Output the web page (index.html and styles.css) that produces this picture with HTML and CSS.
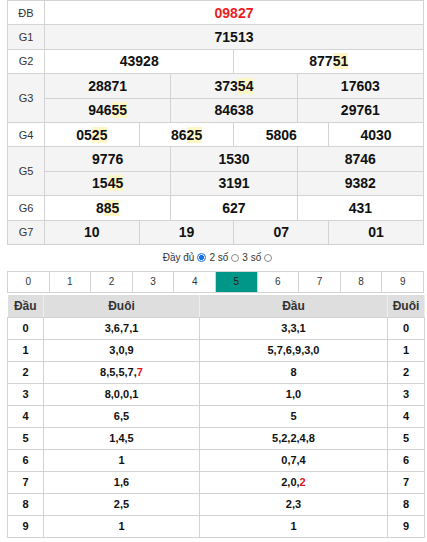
FILE: index.html
```html
<!DOCTYPE html>
<html lang="vi">
<head>
<meta charset="utf-8">
<link rel="stylesheet" href="styles.css">
</head>
<body>
<div class="wrap">
  <table class="kq">
    <colgroup>
      <col class="c-lbl">
      <col><col><col><col><col><col><col><col><col><col><col><col>
    </colgroup>
    <tr class="w"><td class="lbl">ĐB</td><td colspan="12" class="num db">09827</td></tr>
    <tr class="g"><td class="lbl">G1</td><td colspan="12" class="num">71513</td></tr>
    <tr class="w"><td class="lbl">G2</td><td colspan="6" class="num">43928</td><td colspan="6" class="num">877<span class="hl">51</span></td></tr>
    <tr class="g"><td class="lbl" rowspan="2">G3</td><td colspan="4" class="num">28871</td><td colspan="4" class="num">373<span class="hl">54</span></td><td colspan="4" class="num">17603</td></tr>
    <tr class="g"><td colspan="4" class="num">946<span class="hl">55</span></td><td colspan="4" class="num">84638</td><td colspan="4" class="num">29761</td></tr>
    <tr class="w"><td class="lbl">G4</td><td colspan="3" class="num">05<span class="hl">25</span></td><td colspan="3" class="num">86<span class="hl">25</span></td><td colspan="3" class="num">5806</td><td colspan="3" class="num">4030</td></tr>
    <tr class="g"><td class="lbl" rowspan="2">G5</td><td colspan="4" class="num">9776</td><td colspan="4" class="num">1530</td><td colspan="4" class="num">8746</td></tr>
    <tr class="g"><td colspan="4" class="num">15<span class="hl">45</span></td><td colspan="4" class="num">3191</td><td colspan="4" class="num">9382</td></tr>
    <tr class="w"><td class="lbl">G6</td><td colspan="4" class="num">8<span class="hl">85</span></td><td colspan="4" class="num">627</td><td colspan="4" class="num">431</td></tr>
    <tr class="g"><td class="lbl">G7</td><td colspan="3" class="num">10</td><td colspan="3" class="num">19</td><td colspan="3" class="num">07</td><td colspan="3" class="num">01</td></tr>
  </table>

  <div class="opts">
    <span>Đầy đủ</span><span class="radio on"></span><span>2 số</span><span class="radio"></span><span>3 số</span><span class="radio"></span>
  </div>

  <div class="tabs">
    <div class="tab">0</div><div class="tab">1</div><div class="tab">2</div><div class="tab">3</div><div class="tab">4</div><div class="tab active">5</div><div class="tab">6</div><div class="tab">7</div><div class="tab">8</div><div class="tab">9</div>
  </div>

  <table class="ld">
    <colgroup>
      <col class="c1"><col class="c2"><col class="c3"><col class="c4">
    </colgroup>
    <tr class="hd"><th>Đầu</th><th>Đuôi</th><th>Đầu</th><th>Đuôi</th></tr>
    <tr><td>0</td><td>3,6,7,1</td><td>3,3,1</td><td>0</td></tr>
    <tr><td>1</td><td>3,0,9</td><td>5,7,6,9,3,0</td><td>1</td></tr>
    <tr><td>2</td><td>8,5,5,7,<span class="red">7</span></td><td>8</td><td>2</td></tr>
    <tr><td>3</td><td>8,0,0,1</td><td>1,0</td><td>3</td></tr>
    <tr><td>4</td><td>6,5</td><td>5</td><td>4</td></tr>
    <tr><td>5</td><td>1,4,5</td><td>5,2,2,4,8</td><td>5</td></tr>
    <tr><td>6</td><td>1</td><td>0,7,4</td><td>6</td></tr>
    <tr><td>7</td><td>1,6</td><td>2,0,<span class="red">2</span></td><td>7</td></tr>
    <tr><td>8</td><td>2,5</td><td>2,3</td><td>8</td></tr>
    <tr><td>9</td><td>1</td><td>1</td><td>9</td></tr>
  </table>
</div>
</body>
</html>
```

FILE: styles.css
```css
html, body {
  margin: 0;
  padding: 0;
  background: #fff;
}
body {
  font-family: "Liberation Sans", Arial, sans-serif;
  color: #222;
}
.wrap {
  width: 417px;
  margin-left: 7px;
}
table {
  border-collapse: collapse;
  table-layout: fixed;
  width: 417px;
}
.kq td {
  border: 1px solid #d3d3d3;
  height: 23.4px;
  padding: 0;
  text-align: center;
  vertical-align: middle;
}
.kq col.c-lbl { width: 37px; }
.kq tr.g td { background: #f4f4f4; }
.kq tr.w td { background: #fff; }
.kq .lbl {
  font-size: 11px;
  color: #333;
}
.kq .num {
  font-size: 14px;
  font-weight: bold;
  color: #111;
  line-height: 16px;
}
.kq .db { color: #ec1c24; }
.hl { background: #fff6c6; }

.opts {
  margin: 5px 0 5px;
  height: 16px;
  display: flex;
  align-items: center;
  justify-content: center;
  gap: 3px;
  font-size: 10px;
  color: #333;
  padding-left: 4px;
}
.radio {
  width: 8px;
  height: 8px;
  border: 1px solid #8a8a8a;
  border-radius: 50%;
  box-sizing: border-box;
  display: inline-block;
  background: #fff;
}
.radio.on {
  border: 1px solid #1a73e8;
  background: radial-gradient(circle, #1a73e8 0 2.3px, #fff 2.5px);
  width: 9px;
  height: 9px;
}

.tabs {
  display: grid;
  grid-template-columns: repeat(10, 1fr);
  border-top: 1px solid #d3d3d3;
  border-bottom: 1px solid #d3d3d3;
  border-left: 1px solid #d3d3d3;
  height: 22px;
  box-sizing: border-box;
}
.tab {
  border-right: 1px solid #d3d3d3;
  font-size: 10px;
  color: #333;
  display: flex;
  align-items: center;
  justify-content: center;
}
.tab.active {
  background: #009688;
  color: #222;
}

.ld {
  margin-top: 2px;
}
.ld col.c1 { width: 36px; }
.ld col.c2 { width: 156px; }
.ld col.c3 { width: 188px; }
.ld col.c4 { width: 37px; }
.ld th {
  background: #dedede;
  font-size: 12px;
  font-weight: bold;
  color: #333;
  height: 22px;
  padding: 0;
  border-right: 1px solid #eee;
  border-bottom: 1px solid #d3d3d3;
}
.ld td {
  border: 1px solid #d3d3d3;
  height: 21px;
  padding: 0;
  text-align: center;
  font-size: 11px;
  font-weight: bold;
  color: #111;
}
.red { color: #e8141b; }
```
